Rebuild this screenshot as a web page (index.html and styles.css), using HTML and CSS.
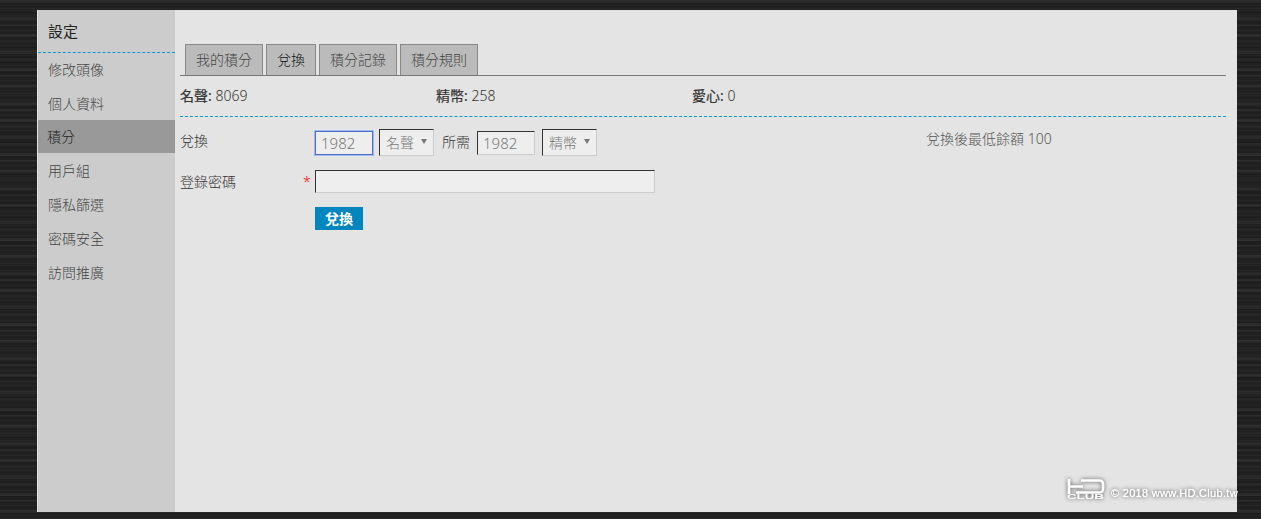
FILE: index.html
```html
<!DOCTYPE html>
<html lang="zh-Hant">
<head>
<meta charset="utf-8">
<title>積分</title>
<link rel="stylesheet" href="styles.css">
</head>
<body>
<div class="panel">
  <aside class="side">
    <h2 class="side-title">設定</h2>
    <ul class="side-list">
      <li class="side-item">修改頭像</li>
      <li class="side-item">個人資料</li>
      <li class="side-item active">積分</li>
      <li class="side-item">用戶組</li>
      <li class="side-item">隱私篩選</li>
      <li class="side-item">密碼安全</li>
      <li class="side-item">訪問推廣</li>
    </ul>
  </aside>
  <main class="content">
    <ul class="tabs">
      <li class="tab">我的積分</li>
      <li class="tab current">兌換</li>
      <li class="tab">積分記錄</li>
      <li class="tab">積分規則</li>
    </ul>
    <div class="stats">
      <div class="stat"><b>名聲:</b> 8069</div>
      <div class="stat"><b>精幣:</b> 258</div>
      <div class="stat"><b>愛心:</b> 0</div>
    </div>
    <form class="form">
      <div class="row row-exchange">
        <label class="label">兌換</label>
        <div class="controls">
          <input class="num focus" type="text" value="1982">
          <span class="sel"><select class="select"><option>名聲</option></select></span>
          <span class="need">所需</span>
          <input class="num" type="text" value="1982">
          <span class="sel sel-last"><select class="select"><option>精幣</option></select></span>
        </div>
        <div class="hint">兌換後最低餘額 100</div>
      </div>
      <div class="row row-pass">
        <label class="label">登錄密碼<span class="req">*</span></label>
        <div class="controls">
          <input class="pass" type="password">
        </div>
      </div>
      <div class="row row-submit">
        <button class="btn" type="button">兌換</button>
      </div>
    </form>
  </main>
</div>
<div class="mark">
  <svg class="mark-logo" width="38" height="21" viewBox="0 0 38 21">
    <path class="mark-shape" d="M2 0V15M2 7.5H16M14 1.5H32Q36 1.5 36 5V10Q36 13.5 32 13.5H9"/>
    <text x="0" y="20" textLength="37" lengthAdjust="spacingAndGlyphs" class="mark-club">CLUB</text>
  </svg>
  <span class="mark-text">© 2018 www.HD.Club.tw</span>
</div>
</body>
</html>
```
FILE: styles.css
```css
* { box-sizing: border-box; }
html, body { margin: 0; padding: 0; height: 519px; overflow: hidden; }
body {
  position: relative;
  padding: 10px 24px 7px 37px;
  background-color: #232323;
  background-image:
    repeating-linear-gradient(180deg, rgba(255,255,255,.025) 0 1px, rgba(0,0,0,0) 1px 2px, rgba(0,0,0,.1) 2px 3px, rgba(0,0,0,0) 3px 5px),
    repeating-linear-gradient(180deg, rgba(255,255,255,.035) 0 3px, rgba(0,0,0,.12) 3px 7px, rgba(255,255,255,.02) 7px 9px, rgba(0,0,0,.06) 9px 17px);
  font-family: "Noto Sans", "Noto Sans CJK TC", sans-serif;
  font-size: 14px;
  font-weight: 300;
  color: #333;
}
ul { list-style: none; margin: 0; padding: 0; }

.panel {
  display: flex;
  width: 1200px;
  height: 502px;
  background: #e4e4e4;
}
.side {
  width: 138px;
  flex: none;
  border-left: 1px solid #e4e4e4;
  background: #ccc;
}
.side-title {
  margin: 0;
  height: 43px;
  padding-left: 10px;
  border-bottom: 1px dashed #0a96e0;
  font-size: 15px;
  font-weight: 400;
  line-height: 43px;
  color: #222;
}
.side-item {
  height: 34px;
  padding-left: 10px;
  line-height: 34px;
  color: #444;
}
.side-item.active {
  height: 33px;
  margin: -1px 0 1px;
  padding-left: 9px;
  background: #999;
  line-height: 33px;
  color: #222;
}

.content {
  flex: 1;
  min-width: 0;
  padding: 34px 11px 0 5px;
}
.tabs {
  display: flex;
  gap: 3px;
  height: 32px;
  padding-left: 5px;
  border-bottom: 1px solid #777;
}
.tab {
  height: 31px;
  padding: 0 10px;
  border: 1px solid #888;
  border-bottom: 0;
  background: #bbb;
  line-height: 30px;
  color: #444;
}
.tab.current { color: #111; }

.stats {
  display: flex;
  height: 41px;
  border-bottom: 1px dashed #0a96e0;
  line-height: 40px;
  color: #333;
}
.stat { width: 256px; }
.stat b { font-weight: 400; color: #333; -webkit-text-stroke: .2px #333; }

.row { display: flex; }
.row-exchange { height: 40px; margin-top: 12px; align-items: flex-start; }
.row-pass { height: 37px; margin-top: 1px; }
.label { width: 135px; flex: none; position: relative; line-height: 24px; color: #333; }
.req { position: absolute; left: 123px; top: 0; color: #f00; }
.controls { display: flex; align-items: flex-start; }

.num, .pass, .select {
  margin: 0;
  border: 1px solid;
  border-color: #333 #ccc #ccc #333;
  border-radius: 0;
  background: #eee;
  font: inherit;
  color: #777;
  outline: 0;
}
.num { width: 58px; height: 24px; margin-top: 2px; padding: 0 5px; font-size: 15px; }
.num.focus { border-color: #4a6fc4; box-shadow: 0 0 0 1px #9dbbf0; }
.pass { width: 340px; height: 23px; }
.sel { position: relative; display: block; margin: 0 7px 0 6px; }
.sel-last { margin-left: 7px; }
.sel::after {
  content: "";
  position: absolute;
  right: 7px;
  top: 10px;
  border: 3.5px solid transparent;
  border-top: 5px solid #777;
  border-bottom: 0;
}
.select {
  display: block;
  width: 55px;
  height: 27px;
  padding: 0 0 0 6px;
  appearance: none;
}
.need { margin: 1px 7px 0 1px; line-height: 24px; color: #333; }
.hint { position: absolute; left: 926px; top: 129px; line-height: 20px; color: #555; }

.row-submit { padding-left: 135px; }
.btn {
  width: 48px;
  height: 23px;
  padding: 0 0 2px;
  border: 0;
  background: #0086be;
  font: inherit;
  font-weight: 700;
  color: #fff;
}

.mark {
  position: absolute;
  left: 1067px;
  top: 479px;
  width: 171px;
  height: 21px;
  display: flex;
  overflow: hidden;
  filter: drop-shadow(0 0 2px rgba(0,0,0,.65));
}
.mark-logo { display: block; flex: none; }
.mark-shape { fill: none; stroke: #fff; stroke-width: 2.6; }
.mark-club { font-family: "Liberation Sans", sans-serif; font-size: 7px; font-weight: 700; fill: #fff; }
.mark-text {
  margin: 7px 0 0 6px;
  font-family: "Liberation Sans", sans-serif;
  font-size: 11px;
  font-weight: 400;
  line-height: 14px;
  letter-spacing: .3px;
  white-space: nowrap;
  color: #fff;
  text-shadow: 0 0 1px #fff;
}
```
